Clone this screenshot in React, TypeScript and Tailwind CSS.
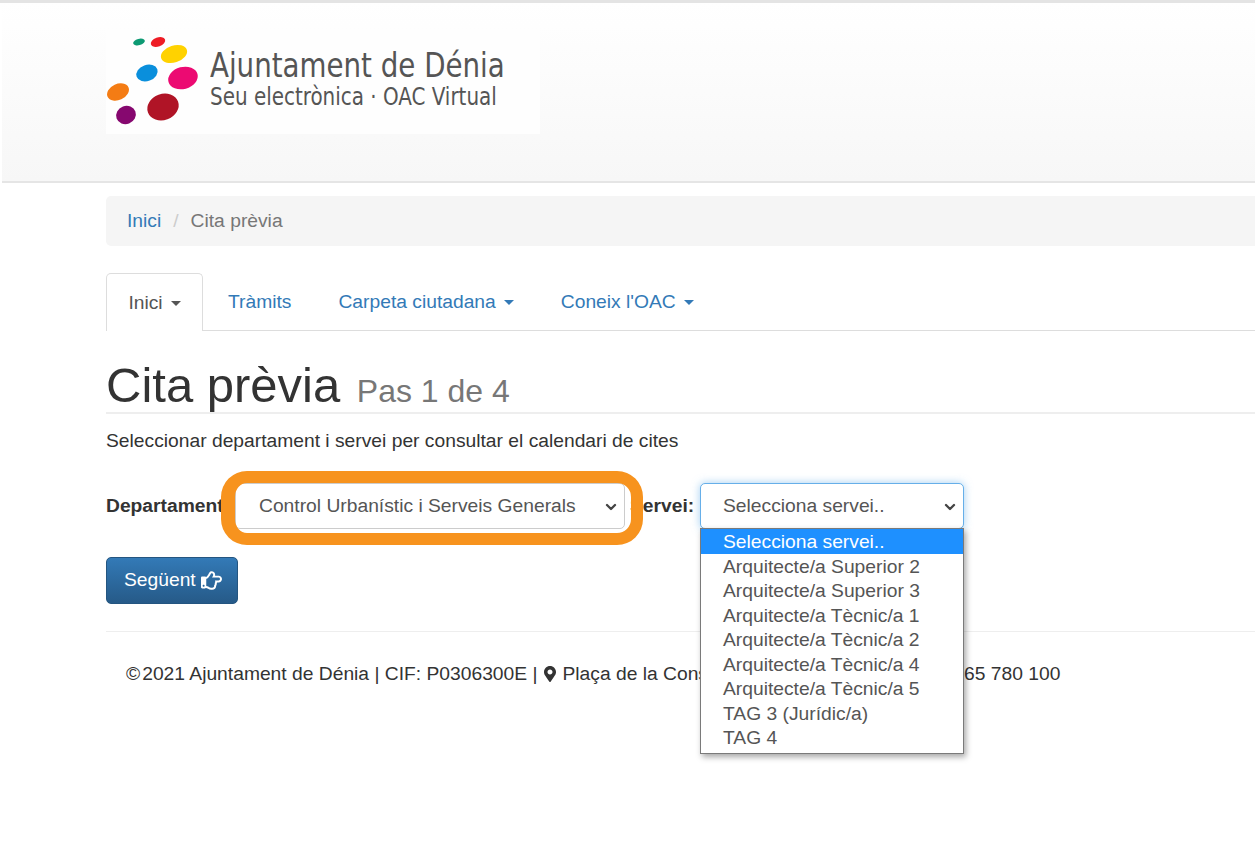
import { ChevronDown } from "lucide-react";
import { FaMapMarkerAlt, FaRegHandPointRight } from "react-icons/fa";

const SERVICES = [
  "Arquitecte/a Superior 2",
  "Arquitecte/a Superior 3",
  "Arquitecte/a Tècnic/a 1",
  "Arquitecte/a Tècnic/a 2",
  "Arquitecte/a Tècnic/a 4",
  "Arquitecte/a Tècnic/a 5",
  "TAG 3 (Jurídic/a)",
  "TAG 4",
];

function Caret({ className }: { className: string }) {
  return (
    <span
      className={`ml-[8px] inline-block h-0 w-0 border-x-[5px] border-t-[5px] border-x-transparent align-middle ${className}`}
    />
  );
}

function Logo() {
  return (
    <div className="flex h-[104px] w-[434px] bg-[#fefefe]">
      <svg width="100" height="104" viewBox="0 0 100 104" className="shrink-0">
        <ellipse cx="33" cy="12" rx="6" ry="3.2" fill="#0d9a73" transform="rotate(-15 33 12)" />
        <ellipse cx="52" cy="12" rx="7.5" ry="4.5" fill="#ee1c25" transform="rotate(-20 52 12)" />
        <ellipse cx="68" cy="24" rx="13.5" ry="8.5" fill="#ffd200" transform="rotate(-18 68 24)" />
        <ellipse cx="41" cy="43" rx="11" ry="8" fill="#0a8fdc" transform="rotate(-20 41 43)" />
        <ellipse cx="77" cy="48" rx="15" ry="11" fill="#ec0a72" transform="rotate(-15 77 48)" />
        <ellipse cx="12" cy="62" rx="11.5" ry="8" fill="#f47c14" transform="rotate(-25 12 62)" />
        <ellipse cx="57" cy="77" rx="16" ry="13" fill="#b01426" transform="rotate(-20 57 77)" />
        <ellipse cx="20" cy="85" rx="10" ry="9" fill="#86086f" transform="rotate(-20 20 85)" />
      </svg>
      <div className="ml-1 flex flex-col pt-[15px] font-['DejaVu_Sans_Condensed','DejaVu_Sans',sans-serif] text-[#555]">
        <span className="origin-left scale-x-[0.905] whitespace-nowrap text-[34px] leading-[40px]">Ajuntament de Dénia</span>
        <span className="-mt-[2px] origin-left scale-x-[0.923] whitespace-nowrap text-[24px] leading-[28px]">
          Seu electrònica · OAC Virtual
        </span>
      </div>
    </div>
  );
}

export default function App() {
  return (
    <div className="h-[863px] w-[1255px] overflow-hidden bg-white font-['Liberation_Sans',Arial,sans-serif] text-[19.25px] text-[#333]">
      <div className="h-[3px] bg-[#e4e4e4]" />
      <header className="ml-[2px] h-[180px] border-b-2 border-[#e5e5e5] bg-gradient-to-b from-white to-[#f7f7f7] pl-[104px] pt-[27px]">
        <Logo />
      </header>

      <main className="pl-[106px]">
        <nav className="mt-[13px] flex h-[50px] items-center rounded-l-[5px] bg-[#f5f5f5] pl-[21px] pt-[1px]">
          <a className="text-[#337ab7]">Inici</a>
          <span className="px-[12px] text-[#ccc]">/</span>
          <span className="text-[#777]">Cita prèvia</span>
        </nav>

        <ul className="mt-[27px] flex h-[58px] border-b border-[#ddd]">
          <li className="-mb-px flex h-[58px] w-[97px] items-center justify-center rounded-t-[5px] border border-b-0 border-[#ddd] bg-white pt-[1px] text-[#555]">
            Inici
            <Caret className="border-t-[#555]" />
          </li>
          <li className="flex items-center pl-[25px] pt-[1px] text-[#337ab7]">Tràmits</li>
          <li className="flex items-center pl-[47px] pt-[1px] text-[#337ab7]">
            Carpeta ciutadana
            <Caret className="border-t-[#337ab7]" />
          </li>
          <li className="flex items-center pl-[47px] pt-[1px] text-[#337ab7]">
            Coneix l'OAC
            <Caret className="border-t-[#337ab7]" />
          </li>
        </ul>

        <div className="mt-[24px] h-[59px] border-b-2 border-[#eee]">
          <h1 className="text-[49px] leading-[60px] text-[#333]">
            Cita prèvia <small className="ml-[3px] text-[32px] text-[#777]">Pas 1 de 4</small>
          </h1>
        </div>

        <p className="mt-[16px] leading-[22px]">Seleccionar departament i servei per consultar el calendari de cites</p>

        <div className="relative mt-[31px] flex h-[46px] items-center">
          <label className="w-[129px] shrink-0 font-bold">Departament:</label>
          <div className="relative shrink-0">
            <div className="absolute -bottom-[16px] -left-[14px] -right-[18px] -top-[12px] z-10 rounded-[26px] border-[12px] border-l-[14px] border-[#f7931e]" />
            <div className="flex h-[46px] w-[390px] items-center justify-between rounded-[5px] border border-[#ccc] bg-white pl-[23px] pr-[5px] pt-[1px] text-[#555]">
              Control Urbanístic i Serveis Generals
              <ChevronDown size={16} strokeWidth={3.5} className="text-[#444]" />
            </div>
          </div>
          <label className="ml-[5px] w-[70px] shrink-0 font-bold">Servei:</label>
          <div className="relative shrink-0">
            <div className="flex h-[46px] w-[264px] items-center justify-between rounded-[5px] border border-[#66afe9] bg-white pl-[22px] pr-[5px] pt-[1px] text-[#555] shadow-[0_0_8px_rgba(102,175,233,0.6)]">
              Selecciona servei..
              <ChevronDown size={16} strokeWidth={3.5} className="text-[#444]" />
            </div>
            <ul className="absolute left-0 top-[45px] z-20 w-[264px] border border-[#7a7a7a] bg-white pb-[3px] text-[#555] shadow-[2px_3px_6px_rgba(0,0,0,0.35)]">
              <li className="h-[24.5px] bg-[#1e90ff] pl-[22px] leading-[25.5px] text-white">Selecciona servei..</li>
              {SERVICES.map((service) => (
                <li key={service} className="h-[24.5px] pl-[22px] leading-[25.5px]">
                  {service}
                </li>
              ))}
            </ul>
          </div>
        </div>

        <button className="mt-[28px] flex h-[47px] w-[132px] items-center gap-[5px] rounded-[5px] border border-[#245580] bg-gradient-to-b from-[#337ab7] to-[#265a88] pl-[17px] text-white">
          Següent
          <FaRegHandPointRight size={21} />
        </button>

        <div className="mt-[27px] border-t border-[#eee] pl-[20px] pt-[31px]">
          <p className="flex items-center whitespace-nowrap leading-[22px]">
            <span className="mr-[2px]">©</span>
            2021 Ajuntament de Dénia | CIF: P0306300E |
            <FaMapMarkerAlt size={16} className="ml-[5px] mr-[4px]" />
            Plaça de la Constitució, 10, 03700 Dénia | Tf. 965 780 100
          </p>
        </div>
      </main>
    </div>
  );
}
